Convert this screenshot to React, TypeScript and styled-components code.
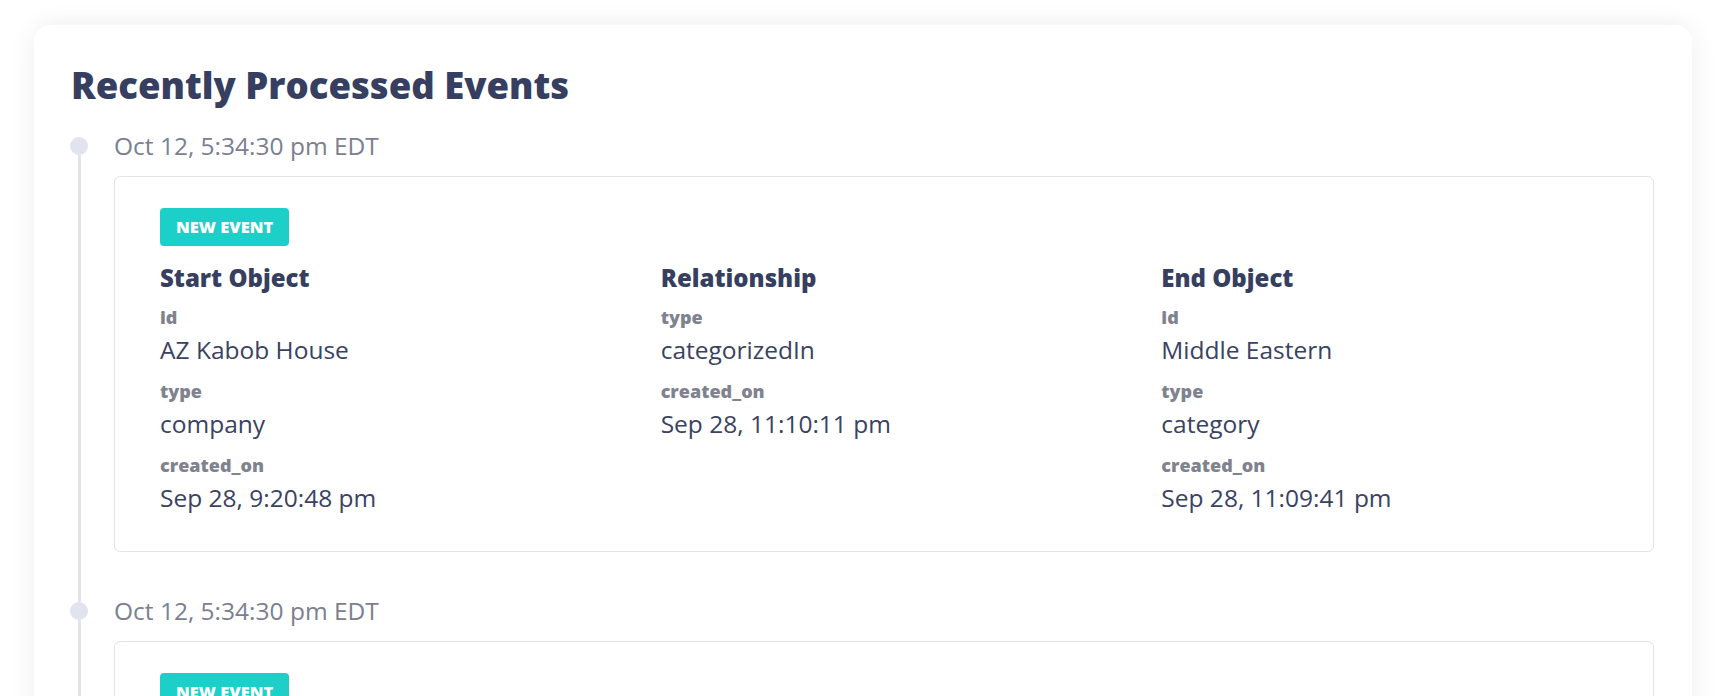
import React from "react"
import styled, { createGlobalStyle } from "styled-components"

const GlobalStyle = createGlobalStyle`
	html, body {
		margin: 0;
		padding: 0;
		background: #ffffff;
	}

	body {
		font-family: "Open Sans", "Noto Sans", sans-serif;
		-webkit-font-smoothing: antialiased;
	}
`

type Field = {
	label: string
	value: string
}

type Column = {
	title: string
	fields: Field[]
}

type EventItem = {
	timestamp: string
	tag: string
	columns: Column[]
}

const eventColumns: Column[] = [
	{
		title: "Start Object",
		fields: [
			{ label: "id", value: "AZ Kabob House" },
			{ label: "type", value: "company" },
			{ label: "created_on", value: "Sep 28, 9:20:48 pm" },
		],
	},
	{
		title: "Relationship",
		fields: [
			{ label: "type", value: "categorizedIn" },
			{ label: "created_on", value: "Sep 28, 11:10:11 pm" },
		],
	},
	{
		title: "End Object",
		fields: [
			{ label: "id", value: "Middle Eastern" },
			{ label: "type", value: "category" },
			{ label: "created_on", value: "Sep 28, 11:09:41 pm" },
		],
	},
]

const events: EventItem[] = [
	{ timestamp: "Oct 12, 5:34:30 pm EDT", tag: "New Event", columns: eventColumns },
	{ timestamp: "Oct 12, 5:34:30 pm EDT", tag: "New Event", columns: eventColumns },
]

const Page = styled.main`
	padding: 0 32px 0 34px;
`

// faint shadow left by the card sitting above, scrolled out of view
const PrevCardEdge = styled.div`
	height: 0;
	margin: 0 40px 25px;
	box-shadow: 0 0 14px 2px rgba(0, 0, 0, 0.05);
`

const Card = styled.section`
	background: #ffffff;
	border-radius: 16px;
	box-shadow: 0 2px 28px rgba(20, 24, 40, 0.07);
	padding: 38px 38px 38px 36px;
`

const Title = styled.h2`
	margin: 0 0 20px 1px;
	font-size: 36.5px;
	line-height: 45px;
	font-weight: 800;
	color: #363f5f;
`

const Timeline = styled.ol`
	list-style: none;
	margin: 0;
	padding: 0;
`

const Item = styled.li`
	display: grid;
	grid-template-columns: 44px 1fr;
`

const Rail = styled.div`
	display: flex;
	flex-direction: column;
	align-items: flex-start;
`

const RailLine = styled.div<{ $hidden?: boolean }>`
	width: 3px;
	margin-left: 8px;
	background: ${(props) => (props.$hidden ? "transparent" : "#e1e3ee")};
`

const TopLine = styled(RailLine)`
	height: 9px;
`

const BottomLine = styled(RailLine)`
	flex: 1;
`

const Dot = styled.span`
	width: 18px;
	height: 18px;
	border-radius: 50%;
	background: #e1e3ee;
`

const Content = styled.div<{ $last?: boolean }>`
	display: flex;
	flex-direction: column;
	min-width: 0;
	padding-bottom: ${(props) => (props.$last ? "0" : "41px")};
`

const Timestamp = styled.div`
	font-size: 24.5px;
	line-height: 36px;
	color: #7b8091;
	margin-bottom: 12px;
`

const EventBox = styled.div`
	border: 1px solid #e3e2ef;
	border-radius: 6px;
	padding: 31px 45px 35px;
`

const Badge = styled.span`
	display: inline-block;
	height: 38px;
	line-height: 38px;
	padding: 0 16px;
	border-radius: 4px;
	background: #1ccfc9;
	color: #ffffff;
	font-size: 16.5px;
	font-weight: 800;
	text-transform: uppercase;
	margin-bottom: 14px;
`

const Columns = styled.div`
	display: grid;
	grid-template-columns: repeat(3, 1fr);
	column-gap: 54px;
`

const ColumnTitle = styled.h3`
	margin: 0 0 8px;
	font-size: 24px;
	line-height: 36px;
	font-weight: 800;
	color: #363f5f;
`

const FieldLabel = styled.div`
	font-size: 18px;
	line-height: 27px;
	font-weight: 800;
	color: #7f838f;
	margin-bottom: 1px;
`

const FieldValue = styled.div`
	font-size: 24.5px;
	line-height: 36px;
	color: #3a4262;
	margin-bottom: 10px;

	&:last-child {
		margin-bottom: 0;
	}
`

const App = () => {
	return (
		<>
			<GlobalStyle />
			<PrevCardEdge />
			<Page>
				<Card>
					<Title>Recently Processed Events</Title>
					<Timeline>
						{events.map((event, i) => (
							<Item key={i}>
								<Rail>
									<TopLine $hidden={i === 0} />
									<Dot />
									<BottomLine />
								</Rail>
								<Content $last={i === events.length - 1}>
									<Timestamp>{event.timestamp}</Timestamp>
									<EventBox>
										<Badge>{event.tag}</Badge>
										<Columns>
											{event.columns.map((col) => (
												<div key={col.title}>
													<ColumnTitle>{col.title}</ColumnTitle>
													{col.fields.map((f) => (
														<React.Fragment key={f.label}>
															<FieldLabel>{f.label}</FieldLabel>
															<FieldValue>{f.value}</FieldValue>
														</React.Fragment>
													))}
												</div>
											))}
										</Columns>
									</EventBox>
								</Content>
							</Item>
						))}
					</Timeline>
				</Card>
			</Page>
		</>
	)
}

export default App
